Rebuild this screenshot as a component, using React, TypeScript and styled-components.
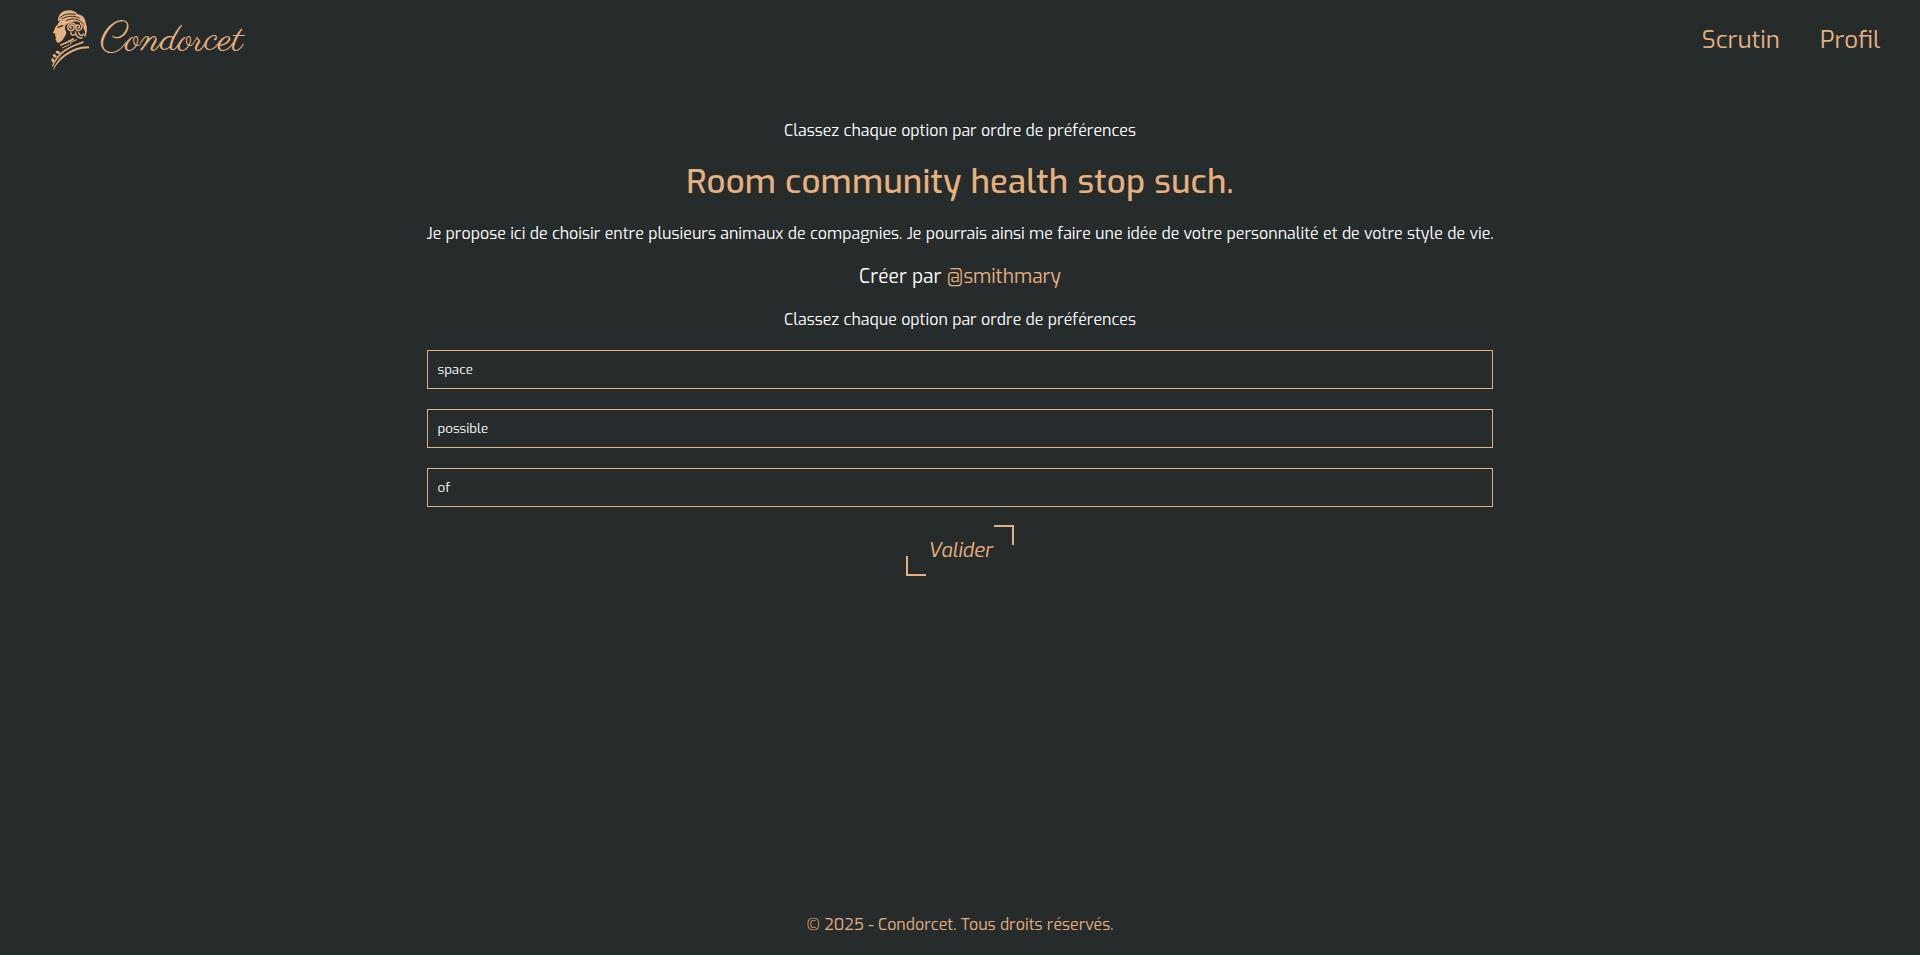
import React from "react";
import styled, { createGlobalStyle } from "styled-components";

const gold = "#e6b17e";
const ink = "#262b2b";
const sans = 'Exo, "Exo 2", Roboto, sans-serif';

const GlobalStyle = createGlobalStyle`
  *, *::before, *::after { box-sizing: border-box; }
  body {
    margin: 0;
    background: ${ink};
    color: #fff;
    font-family: ${sans};
    font-size: 16px;
  }
`;

const Page = styled.div`
  display: flex;
  flex-direction: column;
  min-height: 100vh;
`;

const Header = styled.header`
  display: flex;
  justify-content: space-between;
  align-items: center;
  height: 80px;
  padding: 0 40px 0 50px;
`;

const Brand = styled.a`
  display: flex;
  align-items: center;
  color: ${gold};
`;

const BustIcon = styled.svg`
  display: block;
  width: 41px;
  height: 62px;
`;

const Wordmark = styled.span`
  margin-left: 9px;
  padding-top: 2px;
  font: 40px/50px Parisienne, "Liberation Serif", cursive;
`;

const Nav = styled.nav`
  display: flex;
  gap: 40px;
`;

const NavLink = styled.a`
  color: ${gold};
  font-size: 24px;
`;

const Main = styled.main`
  flex: 1;
  display: flex;
  flex-direction: column;
  align-items: center;
  padding-top: 40px;
`;

const Poll = styled.section`
  display: flex;
  flex-direction: column;
  align-items: center;
  width: 1066px;
`;

const Text = styled.p`
  margin: 0;
  white-space: nowrap;
`;

const Title = styled.h1`
  margin: 20px 0;
  color: ${gold};
  font-size: 33px;
  font-weight: 500;
  letter-spacing: 0.18px;
  line-height: 42px;
  white-space: nowrap;
`;

const Author = styled.h2`
  margin: 20px 0;
  font-size: 19.2px;
  font-weight: 400;
  line-height: 25px;
`;

const Handle = styled.span`
  color: ${gold};
`;

const Options = styled.ul`
  display: flex;
  flex-direction: column;
  gap: 20px;
  width: 100%;
  margin: 20px 0 18px;
  padding: 0;
  list-style: none;
`;

const Option = styled.li`
  height: 39px;
  padding: 0 9.5px;
  border: 1px solid ${gold};
  font-size: 13.33px;
  line-height: 37px;
`;

const Submit = styled.button`
  position: relative;
  width: 108px;
  height: 51px;
  padding: 0;
  border: 0;
  background: none;
  color: ${gold};
  font: italic 20px/51px ${sans};

  &::before,
  &::after {
    content: "";
    position: absolute;
    width: 20px;
    height: 20px;
    border: 0 solid ${gold};
  }
  &::before {
    top: 0;
    right: 0;
    border-width: 2px 2px 0 0;
  }
  &::after {
    bottom: 0;
    left: 0;
    border-width: 0 0 2px 2px;
  }
`;

const Footer = styled.footer`
  padding-bottom: 20px;
  color: ${gold};
  text-align: center;
`;

const Bust = () => (
  <BustIcon viewBox="30 26 123 186" fill="none" stroke={gold} strokeLinecap="round" aria-hidden>
    {/* face */}
    <path fill={gold} stroke="none" d="M59 62L77 60C81 65 80 70 76 75L75 86C78 92 79 96 79 100L75 107L68 119L60 126C54 128 49 127 49 121L46 116L49 112L45 107L47 101L39 98C39 94 45 88 45 82C47 77 52 74 54 70Z" />
    <path stroke={ink} strokeWidth="4" d="M54 81L68 76" />
    {/* hair */}
    <path fill={gold} stroke="none" d="M54 57C56 40 70 30 86 30C98 30 108 34 113 42C128 44 136 54 137 68C142 78 142 92 138 99C136 88 132 78 124 70C116 62 104 62 92 65C84 68 80 72 77 76C78 66 72 60 54 62Z" />
    <path stroke={ink} strokeWidth="3" d="M59 53C70 42 88 38 106 42M66 56C82 46 102 45 118 53M78 61C98 51 118 55 131 72" />
    {/* curls */}
    <g strokeWidth="4.5">
      <path d="M95 83C89 84 87 75 95 74C104 74 105 91 94 91C83 91 80 78 87 71C95 64 105 69 107 77" />
      <path d="M114 83C120 84 121 75 113 74C105 75 106 91 115 91C126 90 129 78 122 70" />
      <path d="M93 97C92 103 98 106 104 103M106 95C107 107 116 115 126 112M116 97C117 107 128 108 130 101M132 82C138 92 140 100 134 107" />
    </g>
    {/* collar and coat */}
    <path strokeWidth="5" d="M62 134C76 129 88 123 100 116" />
    <path strokeWidth="3" d="M68 142C78 138 86 134 94 129M91 126L110 118" />
    <path fill={gold} stroke="none" d="M35 200C44 172 66 150 92 138C106 131 118 127 131 122L131 127C118 132 106 136 96 141C70 154 52 172 40 196ZM38 209C50 178 74 158 102 146C118 140 132 138 147 138L147 144C132 144 120 146 106 151C78 162 58 180 42 205Z" />
    <path strokeWidth="8" d="M51 155L57 157M42 165L46 168M38 178L39 182" />
  </BustIcon>
);

const options = ["space", "possible", "of"];

export default function App() {
  return (
    <Page>
      <GlobalStyle />
      <Header>
        <Brand>
          <Bust />
          <Wordmark>Condorcet</Wordmark>
        </Brand>
        <Nav>
          <NavLink>Scrutin</NavLink>
          <NavLink>Profil</NavLink>
        </Nav>
      </Header>
      <Main>
        <Poll>
          <Text>Classez chaque option par ordre de préférences</Text>
          <Title>Room community health stop such.</Title>
          <Text>
            Je propose ici de choisir entre plusieurs animaux de compagnies. Je pourrais ainsi me
            faire une idée de votre personnalité et de votre style de vie.
          </Text>
          <Author>
            Créer par <Handle>@smithmary</Handle>
          </Author>
          <Text>Classez chaque option par ordre de préférences</Text>
          <Options>
            {options.map((label) => (
              <Option key={label}>{label}</Option>
            ))}
          </Options>
          <Submit type="button">Valider</Submit>
        </Poll>
      </Main>
      <Footer>© 2025 - Condorcet. Tous droits réservés.</Footer>
    </Page>
  );
}
